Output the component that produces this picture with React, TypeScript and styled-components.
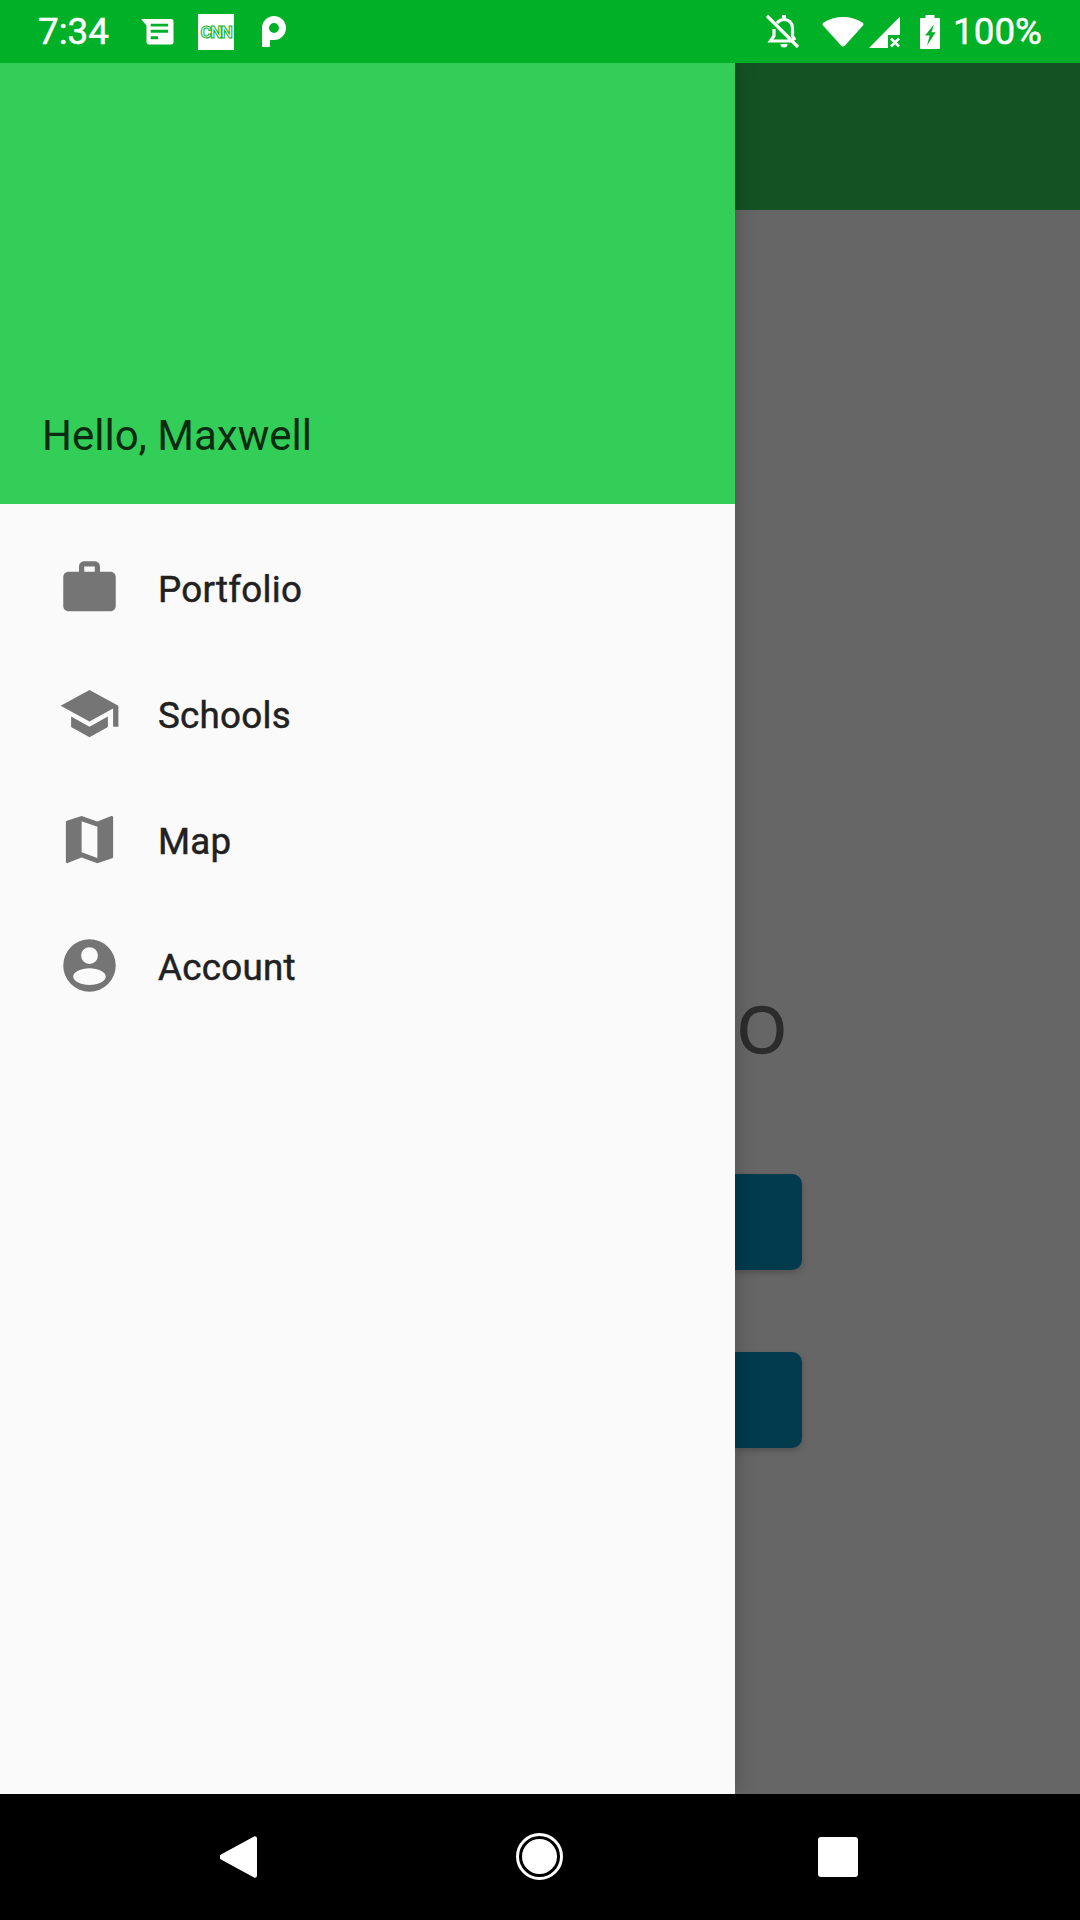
import React from "react";
import styled, { createGlobalStyle } from "styled-components";

const GlobalStyle = createGlobalStyle`
  html, body {
    margin: 0;
    padding: 0;
    background: #000;
  }
  * {
    box-sizing: border-box;
  }
`;

const Page = styled.div`
  width: 1080px;
  height: 1920px;
  display: flex;
  flex-direction: column;
  overflow: hidden;
  font-family: Roboto, "Liberation Sans", sans-serif;
`;

const StatusBar = styled.div`
  height: 63px;
  flex: none;
  display: flex;
  align-items: center;
  padding: 0 38px;
  background: #00b026;
  color: #fff;
`;

const StatusText = styled.span<{ $gap?: number }>`
  font-size: 36.75px;
  line-height: 63px;
  -webkit-text-stroke: 0.5px #fff;
  margin-left: ${(p) => p.$gap ?? 0}px;
`;

const Spacer = styled.div`
  flex: 1;
`;

const Glyph = styled.svg<{ $gap?: number }>`
  display: block;
  flex: none;
  margin-left: ${(p) => p.$gap ?? 0}px;
  fill: #fff;
`;

const CnnBadge = styled.div`
  width: 36px;
  height: 36px;
  margin-left: 24px;
  flex: none;
  display: flex;
  align-items: center;
  justify-content: center;
  background: #fff;
`;

const CnnText = styled.span`
  font-size: 17px;
  font-weight: 700;
  letter-spacing: -1.5px;
  color: #fff;
  -webkit-text-stroke: 1px #00b026;
`;

const Middle = styled.div`
  flex: 1;
  display: flex;
  min-height: 0;
  overflow: hidden;
`;

const Drawer = styled.div`
  width: 735px;
  flex: none;
  display: flex;
  flex-direction: column;
  background: #fafafa;
  position: relative;
  z-index: 1;
  box-shadow: 0 0 22px rgba(0, 0, 0, 0.22);
`;

const DrawerHeader = styled.div`
  height: 441px;
  flex: none;
  display: flex;
  align-items: flex-end;
  padding: 0 42px 44px;
  background: #33ce57;
`;

const Greeting = styled.div`
  font-size: 42px;
  line-height: 49px;
  color: #0a2a11;
`;

const NavList = styled.div`
  display: flex;
  flex-direction: column;
  padding-top: 22px;
`;

const NavRow = styled.div`
  height: 126px;
  display: flex;
  align-items: center;
  gap: 37px;
  padding-left: 58px;
`;

const NavIcon = styled.svg`
  width: 63px;
  height: 63px;
  flex: none;
  margin-bottom: 4px;
  fill: #757575;
`;

const NavLabel = styled.span`
  font-size: 36.75px;
  letter-spacing: 0.25px;
  color: #212121;
  -webkit-text-stroke: 0.5px #212121;
`;

const Behind = styled.div`
  flex: 1;
  display: flex;
  flex-direction: column;
  background: #666;
`;

const Toolbar = styled.div`
  height: 147px;
  flex: none;
  background: #145224;
`;

const Title = styled.div`
  margin-top: 785px;
  padding-left: 2px;
  font-family: "Open Sans", sans-serif;
  font-size: 64px;
  line-height: 68px;
  color: #2c2c2c;
  -webkit-text-stroke: 1.5px #2c2c2c;
`;

const Stub = styled.div<{ $gap: number }>`
  width: 67px;
  height: 96px;
  margin-top: ${(p) => p.$gap}px;
  background: #023b4d;
  border-radius: 0 10px 10px 0;
  box-shadow: 0 3px 6px rgba(0, 0, 0, 0.2);
`;

const SoftKeys = styled.div`
  height: 126px;
  flex: none;
  display: flex;
  align-items: center;
  padding: 0 0 1px 220px;
  background: #000;
`;

const items = [
  {
    label: "Portfolio",
    path: "M20 6h-4V4c0-1.11-.89-2-2-2h-4c-1.11 0-2 .89-2 2v2H4c-1.11 0-1.99.89-1.99 2L2 19c0 1.11.89 2 2 2h16c1.11 0 2-.89 2-2V8c0-1.11-.89-2-2-2zm-6 0h-4V4h4v2z",
  },
  {
    label: "Schools",
    path: "M5 13.18v4L12 21l7-3.82v-4L12 17l-7-3.82zM12 3L1 9l11 6 9-4.91V17h2V9L12 3z",
  },
  {
    label: "Map",
    path: "M20.5 3l-.16.03L15 5.1 9 3 3.36 4.9c-.21.07-.36.25-.36.48V20.5c0 .28.22.5.5.5l.16-.03L9 18.9l6 2.1 5.64-1.9c.21-.07.36-.25.36-.48V3.5c0-.28-.22-.5-.5-.5zM15 19l-6-2.11V5l6 2.11V19z",
  },
  {
    label: "Account",
    path: "M12 2a10 10 0 1 0 0 20a10 10 0 1 0 0-20zM12 5a3.2 3.2 0 1 1 0 6.4a3.2 3.2 0 1 1 0-6.4zM12 13c3.4 0 6.2 1.4 6.2 3.2s-2.8 3.2-6.2 3.2s-6.2-1.4-6.2-3.2s2.8-3.2 6.2-3.2z",
  },
];

const App = () => {
  return (
    <Page>
      <GlobalStyle />
      <StatusBar>
        <StatusText>7:34</StatusText>
        <Glyph $gap={32} width="33" height="26" viewBox="0 0 33 26">
          <path
            fillRule="evenodd"
            d="M0 0H30a2.500 2.500 0 0 1 2.500 2.500V23a2.500 2.500 0 0 1-2.500 2.500H8a2.500 2.500 0 0 1-2.500-2.500V6.500zM9.700 4.700V7.500H27V4.700zM9.700 10.700V13.700H27V10.700zM9.700 17.300V20.300H17V17.300z"
          />
        </Glyph>
        <CnnBadge>
          <CnnText>CNN</CnnText>
        </CnnBadge>
        <Glyph $gap={28} width="25" height="31" viewBox="0 0 25 31">
          <path
            fillRule="evenodd"
            d="M1 31a1 1 0 0 1-1-1V12A12 12 0 0 1 24 12A12 12 0 0 1 12 24H8V30a1 1 0 0 1-1 1zM12 7A5 5 0 0 0 12 17A5 5 0 0 0 12 7z"
          />
        </Glyph>
        <Spacer />
        <Glyph width="34" height="35" viewBox="0 0 34 35">
          <path
            fill="none"
            stroke="#fff"
            strokeWidth="3.2"
            d="M11 9C13 6.500 15 5.500 18 5.500C23 5.500 26.500 9 26.500 14V22L29 26M8 15V22L4.500 27H27M1 2L32 33"
          />
          <path d="M16 1h4v4h-4zM14.500 30h7a3.500 3.500 0 0 1-7 0z" />
        </Glyph>
        <Glyph $gap={22} width="42" height="30" viewBox="0 0 42 30">
          <path d="M21 29.500c-.8 0-1.500-.4-2-1L1 8.500C.2 7.500.4 6.500 1.300 5.800C7 1.800 13.700 0 21 0s14 1.800 19.700 5.800c.9.7 1.100 1.700.3 2.700L23 28.500c-.5.6-1.200 1-2 1z" />
        </Glyph>
        <Glyph $gap={5} width="32" height="32" viewBox="0 0 32 32">
          <path d="M31 .5V19H19V32H0z" />
          <path
            fill="none"
            stroke="#fff"
            strokeWidth="2.500"
            d="M22 22.500L30 30.500M30 22.500L22 30.500"
          />
        </Glyph>
        <Glyph $gap={19} width="20" height="34" viewBox="0 0 20 34">
          <path
            fillRule="evenodd"
            d="M5.500 0H14.500V3H19a1 1 0 0 1 1 1V33a1 1 0 0 1-1 1H1a1 1 0 0 1-1-1V4a1 1 0 0 1 1-1H5.500zM14 9.500L5 20.500H9.700L7 30.500L15.700 17.300H11.500z"
          />
        </Glyph>
        <StatusText $gap={13}>100%</StatusText>
      </StatusBar>
      <Middle>
        <Drawer>
          <DrawerHeader>
            <Greeting>Hello, Maxwell</Greeting>
          </DrawerHeader>
          <NavList>
            {items.map((item) => (
              <NavRow key={item.label}>
                <NavIcon viewBox="0 0 24 24">
                  <path fillRule="evenodd" d={item.path} />
                </NavIcon>
                <NavLabel>{item.label}</NavLabel>
              </NavRow>
            ))}
          </NavList>
        </Drawer>
        <Behind>
          <Toolbar />
          <Title>O</Title>
          <Stub $gap={111} />
          <Stub $gap={82} />
        </Behind>
      </Middle>
      <SoftKeys>
        <Glyph width="37" height="42" viewBox="0 0 37 42">
          <path d="M34.500 0.300a2 2 0 0 1 2.500 2V39.700a2 2 0 0 1-2.500 2L1 23.500a3 3 0 0 1 0-5z" />
        </Glyph>
        <Glyph $gap={259} width="47" height="47" viewBox="0 0 47 47">
          <circle cx="23.500" cy="23.500" r="22" fill="none" stroke="#fff" strokeWidth="3" />
          <circle cx="23.500" cy="23.500" r="17.500" />
        </Glyph>
        <Glyph $gap={255} width="40" height="40" viewBox="0 0 40 40">
          <rect width="40" height="40" rx="3" />
        </Glyph>
      </SoftKeys>
    </Page>
  );
};

export default App;
